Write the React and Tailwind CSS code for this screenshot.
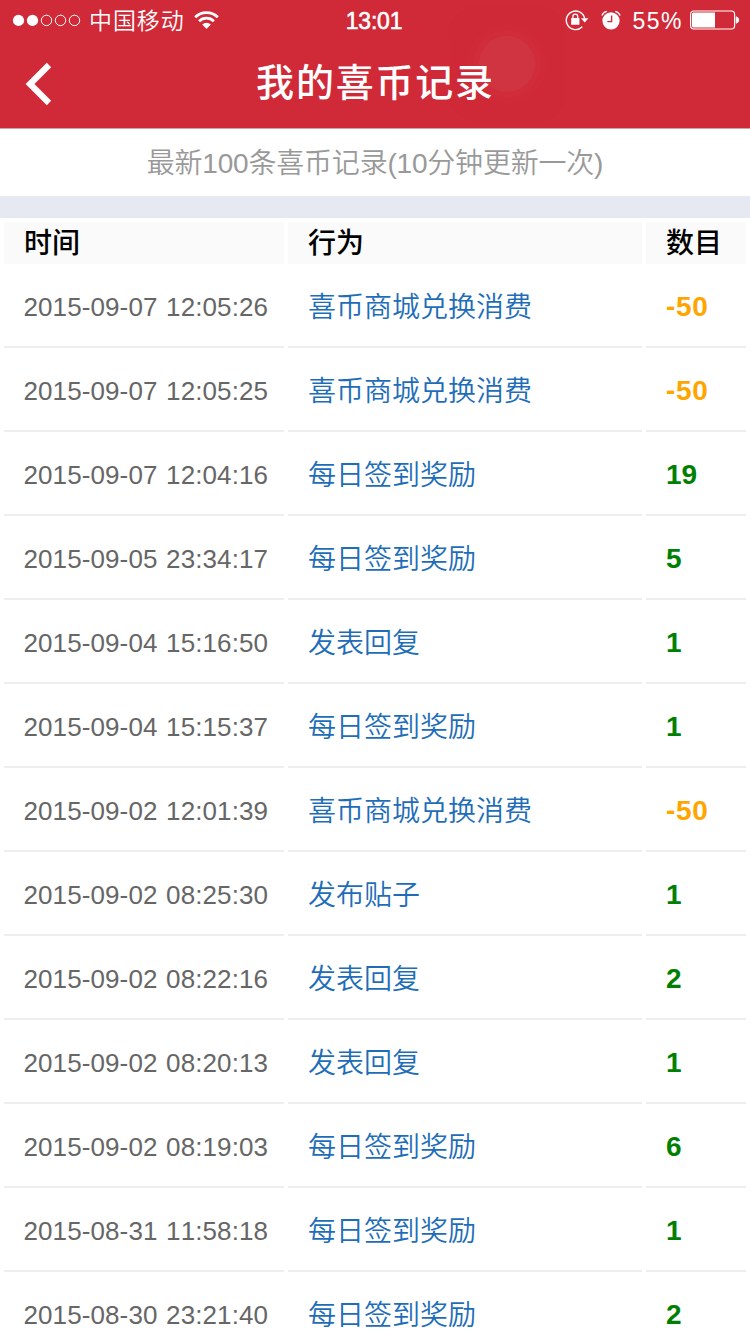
import React from "react";

const records = [
  { time: "2015-09-07 12:05:26", action: "喜币商城兑换消费", amount: -50 },
  { time: "2015-09-07 12:05:25", action: "喜币商城兑换消费", amount: -50 },
  { time: "2015-09-07 12:04:16", action: "每日签到奖励", amount: 19 },
  { time: "2015-09-05 23:34:17", action: "每日签到奖励", amount: 5 },
  { time: "2015-09-04 15:16:50", action: "发表回复", amount: 1 },
  { time: "2015-09-04 15:15:37", action: "每日签到奖励", amount: 1 },
  { time: "2015-09-02 12:01:39", action: "喜币商城兑换消费", amount: -50 },
  { time: "2015-09-02 08:25:30", action: "发布贴子", amount: 1 },
  { time: "2015-09-02 08:22:16", action: "发表回复", amount: 2 },
  { time: "2015-09-02 08:20:13", action: "发表回复", amount: 1 },
  { time: "2015-09-02 08:19:03", action: "每日签到奖励", amount: 6 },
  { time: "2015-08-31 11:58:18", action: "每日签到奖励", amount: 1 },
  { time: "2015-08-30 23:21:40", action: "每日签到奖励", amount: 2 },
];

function Signal() {
  return (
    <svg width="70" height="14" viewBox="0 0 70 14" className="shrink-0">
      <circle cx="6.5" cy="7.4" r="5.6" fill="white" />
      <circle cx="20.5" cy="7.4" r="5.6" fill="white" />
      <g fill="none" stroke="white" strokeWidth="1">
        <circle cx="34.5" cy="7.4" r="5.2" />
        <circle cx="48.5" cy="7.4" r="5.2" />
        <circle cx="62.5" cy="7.4" r="5.2" />
      </g>
    </svg>
  );
}

function Wifi() {
  return (
    <svg width="26" height="20" viewBox="0 0 26 20" className="ml-2 shrink-0">
      <g fill="none" stroke="white" strokeWidth="2.8">
        <path d="M2.2 7.2a16 16 0 0 1 22.6 0" />
        <path d="M6.1 11.2a10.500 10.500 0 0 1 14.8 0" />
      </g>
      <path d="M13.5 19l-4.300-4.400a6.100 6.100 0 0 1 8.600 0z" fill="white" />
    </svg>
  );
}

function RotationLock() {
  return (
    <svg width="24" height="22" viewBox="0 0 24 22" className="shrink-0">
      <path d="M17.3 17.8A9.3 9.3 0 1 1 19.7 9.5" fill="none" stroke="white" strokeWidth="1.4" />
      <path d="M16 9.3h7.4l-3.7 4.2z" fill="white" />
      <rect x="6.2" y="9" width="8.2" height="6.8" rx="0.6" fill="white" />
      <path d="M7.9 9.6V7.5a2.4 2.4 0 0 1 4.8 0v2.1" fill="none" stroke="white" strokeWidth="1.3" />
    </svg>
  );
}

function Alarm() {
  return (
    <svg width="20" height="20" viewBox="0 0 20 20" className="ml-3 shrink-0">
      <circle cx="10" cy="10.8" r="8.6" fill="white" />
      <path d="M0.9 5.4A7 7 0 0 1 5.8 1.3M19.1 5.4A7 7 0 0 0 14.2 1.3" fill="none" stroke="white" strokeWidth="1.3" />
      <path d="M10.6 5.6v6H6.4" fill="none" stroke="#d02937" strokeWidth="1.4" />
    </svg>
  );
}

function Battery() {
  return (
    <svg width="50" height="20" viewBox="0 0 50 20" className="ml-[7px] shrink-0">
      <rect x="0.6" y="1" width="44" height="18" rx="3.2" fill="none" stroke="white" strokeWidth="1.2" />
      <path d="M3.5 2.4H25v15.2H3.5A1.5 1.5 0 0 1 2 16.1V3.9A1.5 1.5 0 0 1 3.5 2.4z" fill="white" />
      <path d="M46.2 6.7a3.4 3.4 0 0 1 0 6.6z" fill="white" stroke="white" strokeWidth="0.8" />
    </svg>
  );
}

function StatusBar() {
  return (
    <div className="grid h-10 grid-cols-[1fr_auto_1fr] items-center pr-[10px] pl-3 text-white">
      <div className="flex items-center">
        <Signal />
        <span className="ml-[7px] pt-0.5 text-[23px] leading-[38px] font-[350] tracking-[0.9px]">中国移动</span>
        <Wifi />
      </div>
      <span className="pt-0.5 pr-1 text-[23px] leading-[38px] tracking-[-0.2px] [-webkit-text-stroke:0.6px_white]">13:01</span>
      <div className="flex items-center justify-end">
        <RotationLock />
        <Alarm />
        <span className="ml-[11px] pt-0.5 text-[23px] leading-[38px] tracking-[1.5px]">55%</span>
        <Battery />
      </div>
    </div>
  );
}

function Header() {
  return (
    <header className="relative h-[129px] overflow-hidden border-b border-[#c9a5a7] bg-[#d02937]">
      {/* AssistiveTouch button floating over the bar */}
      <div className="absolute top-[6px] left-[449px] flex size-[116px] items-center justify-center rounded-[28px] bg-[#cf2836]">
        <div className="flex size-[80px] items-center justify-center rounded-full bg-[#d02a38]">
          <div className="flex size-[68px] items-center justify-center rounded-full bg-[#d02c3a]">
            <div className="size-[56px] rounded-full bg-[#d13441]" />
          </div>
        </div>
      </div>
      <div className="relative">
        <StatusBar />
        <div className="grid h-[88px] grid-cols-[100px_1fr_100px] items-center text-white">
          <svg width="28" height="44" viewBox="0 0 28 44" className="ml-[25px]">
            <path d="M24 3L5 22l19 19" fill="none" stroke="white" strokeWidth="6.2" />
          </svg>
          <h1 className="pb-0.5 pl-px text-center text-[38px] leading-[84px] font-medium tracking-[1.8px]">我的喜币记录</h1>
        </div>
      </div>
    </header>
  );
}

function App() {
  return (
    <div className="h-[1334px] w-[750px] overflow-hidden bg-white font-['Liberation_Sans','Noto_Sans_CJK_SC',sans-serif] [font-kerning:none]">
      <Header />
      <p className="h-[67px] pt-px text-center text-[28px] leading-[68px] font-[350] tracking-[-0.2px] text-[#999]">
        最新100条喜币记录(10分钟更新一次)
      </p>
      <div className="h-[22px] bg-[#e6e9f1]" />

      <div className="grid grid-cols-[280px_354px_100px] gap-1 p-1">
        {["时间", "行为", "数目"].map((label) => (
          <div key={label} className="h-[42px] bg-[#fafafa] pl-5 text-[28px] leading-[44px] font-medium text-black">
            {label}
          </div>
        ))}

        {records.map((r) => (
          <React.Fragment key={r.time}>
            <div className="h-20 border-b-2 border-[#eee] pl-[19.5px] text-[26px] leading-[78px] tracking-[0.1px] whitespace-nowrap text-[#666] [word-spacing:1.3px]">
              {r.time}
            </div>
            <div className="h-20 border-b-2 border-[#eee] pl-5 text-[28px] leading-[80px] font-[350] text-[#1e6db8]">
              {r.action}
            </div>
            <div
              className={`h-20 border-b-2 border-[#eee] pl-5 text-[28px] leading-[78px] font-bold ${
                r.amount < 0 ? "tracking-[0.7px] text-[#ffa500]" : "text-[#008000]"
              }`}
            >
              {r.amount}
            </div>
          </React.Fragment>
        ))}
      </div>
    </div>
  );
}

export default App;
